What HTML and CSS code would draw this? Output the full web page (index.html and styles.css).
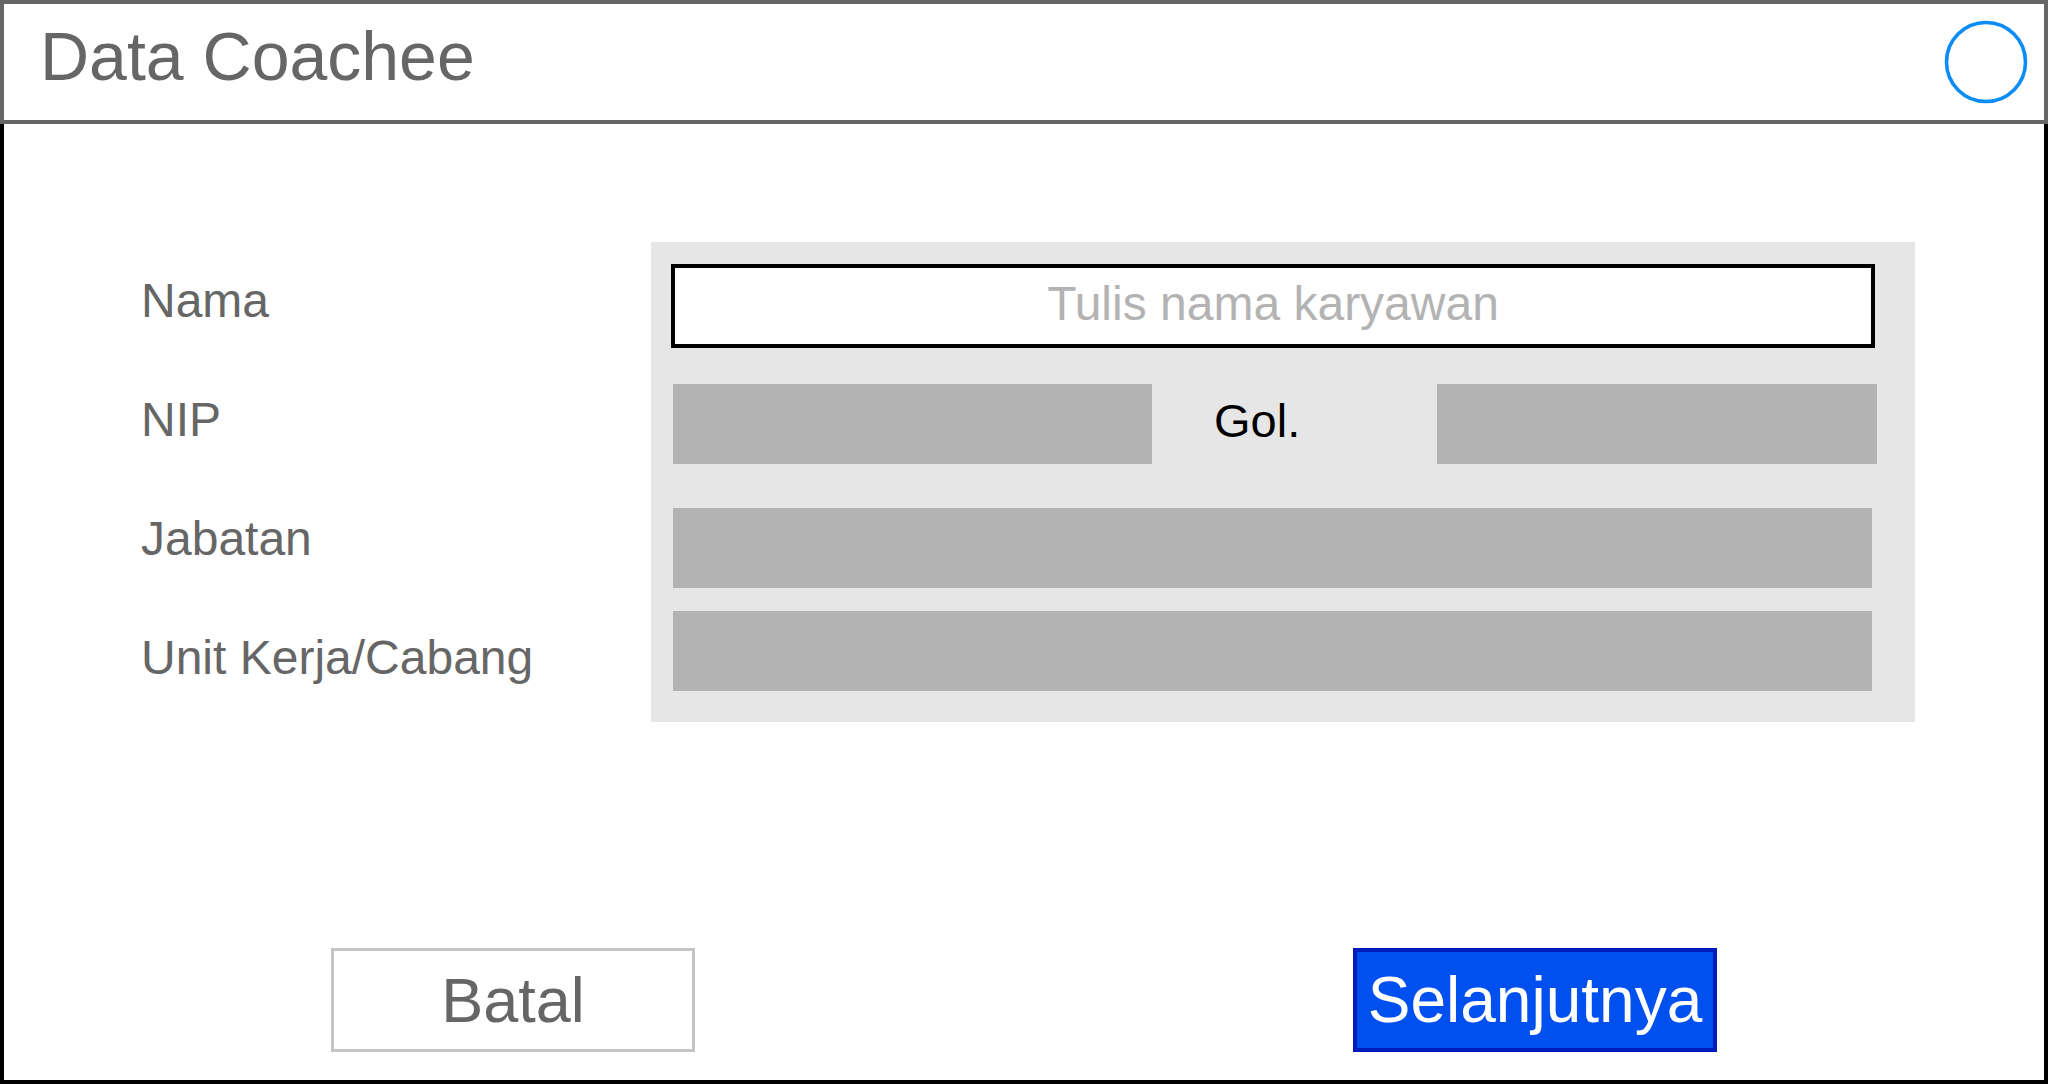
FILE: index.html
```html
<!DOCTYPE html>
<html lang="id">
<head>
<meta charset="utf-8">
<title>Data Coachee</title>
<link rel="stylesheet" href="styles.css">
</head>
<body>
<div class="screen">
  <header class="topbar">
    <h1 class="title">Data Coachee</h1>
    <svg class="status" width="84" height="84" viewBox="0 0 84 84" aria-hidden="true">
      <circle cx="42" cy="42" r="39.5" fill="none" stroke="#0b8cf7" stroke-width="3.6"/>
    </svg>
  </header>
  <main class="content">
    <section class="form">
      <div class="labels">
        <div class="label">Nama</div>
        <div class="label">NIP</div>
        <div class="label">Jabatan</div>
        <div class="label">Unit Kerja/Cabang</div>
      </div>
      <div class="panel">
        <div class="input">Tulis nama karyawan</div>
        <div class="row-nip">
          <div class="field field-nip"></div>
          <div class="gol">Gol.</div>
          <div class="field field-gol"></div>
        </div>
        <div class="field field-jabatan"></div>
        <div class="field field-unit"></div>
      </div>
    </section>
    <footer class="actions">
      <div class="btn btn-cancel">Batal</div>
      <div class="btn btn-next">Selanjutnya</div>
    </footer>
  </main>
</div>
</body>
</html>
```

FILE: styles.css
```css
* {
  box-sizing: border-box;
}

html, body {
  margin: 0;
  padding: 0;
  background: #ffffff;
}

body {
  font-family: "Liberation Sans", Arial, Helvetica, sans-serif;
  width: 2048px;
  height: 1084px;
  overflow: hidden;
}

.screen {
  width: 2048px;
  height: 1084px;
  display: flex;
  flex-direction: column;
}

.topbar {
  height: 124px;
  border: 4px solid #666666;
  display: flex;
  align-items: center;
  justify-content: space-between;
  padding: 0 16px 0 36px;
  flex: none;
}

.title {
  align-self: flex-start;
  margin: 18px 0 0 0;
  font-size: 68px;
  line-height: 68px;
  font-weight: normal;
  color: #666666;
}

.status {
  display: block;
}

.content {
  flex: 1;
  border: 4px solid #000000;
  border-top: none;
  display: flex;
  flex-direction: column;
  padding: 118px 0 0 137px;
}

.form {
  display: flex;
}

.labels {
  width: 510px;
  display: flex;
  flex-direction: column;
  gap: 71px;
  padding-top: 35px;
}

.label {
  font-size: 48px;
  line-height: 48px;
  color: #666666;
}

.panel {
  width: 1264px;
  height: 480px;
  background: #e6e6e6;
  padding: 22px 40px 31px 22px;
  display: flex;
  flex-direction: column;
}

.input {
  height: 84px;
  margin-left: -2px;
  border: 4px solid #000000;
  background: #ffffff;
  display: flex;
  align-items: center;
  justify-content: center;
  padding-bottom: 4px;
  font-size: 48px;
  line-height: 48px;
  color: #b3b3b3;
}

.field {
  background: #b3b3b3;
  height: 80px;
}

.row-nip {
  display: flex;
  align-items: center;
  margin-top: 36px;
  height: 80px;
}

.field-nip {
  width: 479px;
}

.gol {
  margin-left: 62px;
  margin-bottom: 7px;
  font-size: 47px;
  line-height: 47px;
  color: #000000;
}

.field-gol {
  width: 440px;
  margin-left: auto;
  margin-right: -2px;
}

.field-jabatan {
  margin-top: 44px;
  margin-right: 3px;
}

.field-unit {
  margin-top: 23px;
  margin-right: 3px;
}

.actions {
  display: flex;
  margin-top: 226px;
  padding-left: 190px;
  gap: 658px;
}

.btn {
  width: 364px;
  height: 104px;
  display: flex;
  align-items: center;
  justify-content: center;
  line-height: 62px;
}

.btn-cancel {
  border: 3px solid #c4c4c4;
  color: #666666;
  background: #ffffff;
  font-size: 63px;
}

.btn-next {
  border: 4px solid #001dbc;
  background: #0050ef;
  color: #ffffff;
  font-size: 64px;
}
```
